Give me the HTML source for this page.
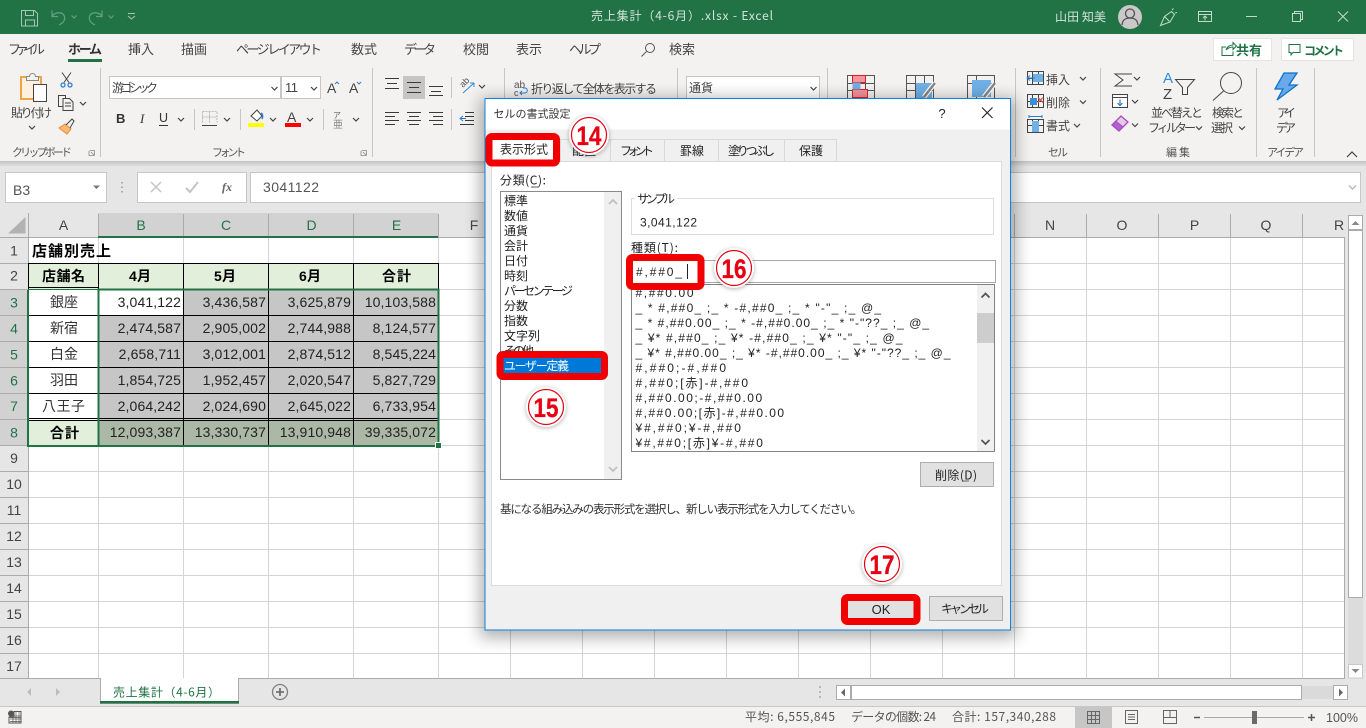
<!DOCTYPE html>
<html lang="ja">
<head>
<meta charset="utf-8">
<title>売上集計（4-6月）.xlsx - Excel</title>
<style>
html,body{margin:0;padding:0;width:1366px;height:728px;overflow:hidden;background:#e6e6e6}
svg{display:block;position:absolute;left:0;top:0}
text{font-family:"Liberation Sans","Noto Sans CJK JP",sans-serif;font-size:12px;fill:#444}
.jp{font-family:"Noto Sans CJK JP","Liberation Sans",sans-serif}
.tb{fill:#d3e3da}
.rb{font-size:12px;fill:#444}
.tab{font-size:13px;fill:#444}
.lb{font-size:11px;fill:#555}
.hd{font-size:14px;fill:#444}
.sh{font-size:14px;fill:#217346}
.c{font-size:14px;fill:#222;text-anchor:end;letter-spacing:.12px}
.b{font-weight:bold;fill:#000}
.d{font-size:12px;fill:#222}
.bd{font-weight:bold;fill:#e60012;font-size:27px;text-anchor:middle;stroke:#e60012;stroke-width:.3px}
.ic{fill:none;stroke:#444;stroke-width:1}
.ch{fill:none;stroke:#444;stroke-width:1.2}
.g{stroke:#d4d4d4;stroke-width:1}
.k{stroke:#000;stroke-width:1}
.hl{stroke:#ababab;stroke-width:1}
</style>
</head>
<body>
<svg width="1366" height="728" viewBox="0 0 1366 728" xmlns="http://www.w3.org/2000/svg">
<defs>
<filter id="sd" x="-10%" y="-10%" width="120%" height="120%"><feGaussianBlur stdDeviation="8"/></filter>
<filter id="bs" x="-30%" y="-30%" width="160%" height="160%"><feGaussianBlur stdDeviation="2.5"/></filter>
<linearGradient id="rs" x1="0" y1="0" x2="0" y2="1"><stop offset="0" stop-color="#c2c2c2"/><stop offset="1" stop-color="#e6e6e6"/></linearGradient>
<clipPath id="fl"><rect x="632" y="285" width="345" height="166"/></clipPath>
<clipPath id="cl"><rect x="501" y="192" width="102" height="287"/></clipPath>
</defs>

<!-- title bar -->
<rect width="1366" height="34" fill="#217346"/>
<g fill="none" stroke="#a7c7b6">
<path d="M21.5 10.5h13l3 3v12.5h-16z"/><path d="M25.5 10.5v5h8v-5M25.5 26v-6h9v6"/>
<path d="M128 13.5h7"/><path d="M128 16l3.5 3 3.5-3"/>
</g>
<g fill="none" stroke="#64a083" stroke-width="1.2">
<path d="M52 10.5v6h6M52 16.5c3-5 11-5 12.5 0c1 4-2 7-5.500 8.5"/>
<path d="M71.5 15.5l2.5 2.5 2.5-2.5"/>
<path d="M102 10.5v6h-6M102 16.5c-3-5-11-5-12.5 0c-1 4 2 7 5.500 8.5"/>
<path d="M108.5 15.5l2.5 2.5 2.5-2.5"/>
</g>
<text x="591" y="20" class="tb jp" textLength="182">売上集計（4-6月）.xlsx  -  Excel</text>
<text x="1055" y="21" class="tb jp" textLength="51">山田 知美</text>
<circle cx="1130" cy="17" r="12" fill="#c9c9c9"/>
<circle cx="1130" cy="13.5" r="4.5" fill="none" stroke="#505050" stroke-width="1.300"/>
<path d="M1122 25c.5-5 3-7 8-7s7.5 2 8 7" fill="none" stroke="#505050" stroke-width="1.300"/>
<g fill="none" stroke="#c3d9cd">
<path d="M1160.5 25.5l4-9 7-5 3 3-4.5 7.5z"/><path d="M1164.5 16.5l5 5M1172 10l1.5-1.5M1175 13l2-.5"/>
<rect x="1198.5" y="11.5" width="13" height="10"/><path d="M1198.5 14.5h13M1205 20.5v-4.500M1203 18l2-2 2 2"/>
<path d="M1246 16.5h11"/>
<rect x="1292.5" y="13.5" width="8" height="8"/><path d="M1294.5 13.5v-2h8v8h-2"/>
<path d="M1338 11.5l10 10M1348 11.5l-10 10"/>
</g>

<!-- ribbon -->
<rect y="34" width="1366" height="127" fill="#f3f2f1"/>
<rect y="161" width="1366" height="6" fill="url(#rs)"/>
<rect y="167" width="1366" height="46" fill="#e6e6e6"/>
<text x="8" y="54" class="tab jp" textLength="37">ファイル</text>
<text x="68" y="54" class="tab jp" style="font-weight:bold;fill:#333" textLength="34">ホーム</text>
<text x="128" y="54" class="tab jp" textLength="26">挿入</text>
<text x="181" y="54" class="tab jp" textLength="26">描画</text>
<text x="236" y="54" class="tab jp" textLength="86">ページ レイアウト</text>
<text x="351" y="54" class="tab jp" textLength="26">数式</text>
<text x="404" y="54" class="tab jp" textLength="32">データ</text>
<text x="463" y="54" class="tab jp" textLength="26">校閲</text>
<text x="516" y="54" class="tab jp" textLength="26">表示</text>
<text x="569" y="54" class="tab jp" textLength="32">ヘルプ</text>
<text x="669" y="54" class="tab jp" textLength="26">検索</text>
<rect x="68" y="59" width="34" height="3" fill="#217346"/>
<circle cx="650" cy="48" r="4.5" fill="none" stroke="#555"/><path d="M646.500 51.500l-5 5" stroke="#555" fill="none"/>
<rect x="1213.5" y="38.5" width="58" height="22" fill="#fff" stroke="#e4e4e4"/>
<rect x="1281.5" y="38.5" width="72" height="22" fill="#fff" stroke="#e4e4e4"/>
<path d="M1226 47h-4v8.500h11v-4M1226 50c1-3 3-5 7-5v-2.500l3.500 3.500-3.500 3.500V47c-3 0-5 1-7 3z" fill="none" stroke="#217346"/>
<text x="1236" y="55" class="jp" style="font-size:13px;font-weight:bold;fill:#217346" textLength="26">共有</text>
<path d="M1289 44.500h11v8h-7l-2 2.500v-2.500h-2z" fill="none" stroke="#217346"/>
<text x="1304" y="55" class="jp" style="font-size:12px;font-weight:bold;fill:#217346" textLength="40">コメント</text>

<!-- group separators -->
<g stroke="#c8c6c4"><path d="M100.500 68v89M372.500 68v89M504.500 68v30M677.500 68v30M827.500 68v30M1015.500 68v89M1100.500 68v89M1256.500 68v89M1314.500 68v89"/></g>

<!-- clipboard -->
<rect x="21" y="77" width="20" height="22" fill="#fdf0dd" stroke="#f0a545" stroke-width="2"/>
<path d="M26.500 80.500v-4h3c0-4 6-4 6 0h3v4z" fill="#f3f2f1" stroke="#888"/>
<rect x="33.5" y="84.5" width="13" height="17" fill="#fff" stroke="#444"/>
<text x="11" y="117" class="rb jp" textLength="41">貼り付け</text>
<path d="M29 126l3 3 3-3" class="ch"/>
<path d="M62 72.5l7 10M71 72.5l-7 10" class="ic"/>
<circle cx="63" cy="85" r="2" fill="none" stroke="#2b7cd3" stroke-width="1.300"/><circle cx="70" cy="85" r="2" fill="none" stroke="#2b7cd3" stroke-width="1.300"/>
<path d="M62.500 106.500h-4v-11h7v3" class="ic"/><path d="M63 98.500h6.5l3.5 3.5v8.500H63zM65 103h6M65 106h6" class="ic" fill="#fff"/>
<path d="M80 102l3 3 3-3" class="ch"/>
<path d="M59 128l8 6 4-5-6-5z" fill="#f8b878" stroke="#ea8c30"/><path d="M66 125l6-6 2 2-4 7" fill="none" stroke="#444"/>
<text x="12" y="156" class="lb jp" textLength="60">クリップボード</text>
<path d="M89.500 150.500h5v5M91 152l3.5 3.500M89 151v4.500h5" fill="none" stroke="#888" stroke-width=".8"/>

<!-- font -->
<rect x="109.5" y="76.5" width="171" height="22" fill="#fff" stroke="#c6c6c6"/>
<rect x="281.5" y="76.5" width="39" height="22" fill="#fff" stroke="#c6c6c6"/>
<text x="112" y="92" class="rb jp" textLength="46">游ゴシック</text>
<text x="285" y="92" style="font-size:13px;fill:#444" textLength="13">11</text>
<path d="M271.500 87l3 3 3-3M311 87l3 3 3-3" class="ch"/>
<text x="327" y="93" style="font-size:14px;fill:#444">A</text><path d="M335 84l2-2 2 2" fill="none" stroke="#2b7cd3"/>
<text x="349" y="93" style="font-size:14px;fill:#444">A</text><path d="M357 82l2 2 2-2" fill="none" stroke="#2b7cd3"/>
<text x="116" y="123" style="font-size:13px;font-weight:bold;fill:#333">B</text>
<text x="140" y="123" style="font-size:13px;font-style:italic;fill:#333;font-family:'Liberation Serif',serif">I</text>
<text x="159" y="122" style="font-size:12.5px;fill:#333">U</text><path d="M159 125.500h9" stroke="#333"/>
<path d="M178 118l3 3 3-3" class="ch"/>
<path d="M194.500 109v21M240.500 109v21M323.500 109v21" stroke="#c8c6c4"/>
<path d="M202.500 111.500h14.500v11M202.500 111.500v11M209.500 111.500v11M202.500 117h14.500" fill="none" stroke="#bbb" stroke-dasharray="2 1"/><path d="M202 125.500h15" stroke="#444"/>
<path d="M224 118l3 3 3-3" class="ch"/>
<path d="M251 116l6-6 5 6-5 5z" fill="#fff" stroke="#444"/><path d="M261 113c2 1 2 4 1 6" fill="none" stroke="#2b7cd3" stroke-width="1.500"/>
<rect x="248" y="123" width="16" height="4" fill="#ffff00"/>
<path d="M270 118l3 3 3-3" class="ch"/>
<text x="287" y="122" style="font-size:14px;fill:#444">A</text>
<rect x="285" y="123" width="16" height="4" fill="#ff0000"/>
<path d="M307 118l3 3 3-3" class="ch"/>
<text x="333" y="118" class="jp" style="font-size:8px;fill:#666">ア</text>
<text x="333" y="128" class="jp" style="font-size:10px;fill:#888">亜</text>
<path d="M353 118l3 3 3-3" class="ch"/>
<text x="212" y="156" class="lb jp" textLength="34">フォント</text>
<path d="M361.500 150.500h5v5M363 152l3.500 3.500M361 151v4.500h5" fill="none" stroke="#888" stroke-width=".8"/>

<!-- alignment -->
<rect x="403" y="76" width="22" height="23" fill="#c6c5c3"/>
<g stroke="#3a3a3a" fill="none">
<path d="M385 78.500h14M387 83.500h10M385 88.500h14"/>
<path d="M407 82.500h14M409 87.500h10M407 92.500h14"/>
<path d="M429 86.500h14M431 91.500h10M429 95.500h14"/>
<path d="M385 112.500h14M385 116.500h10M385 120.500h14M385 124.500h10"/>
<path d="M407 112.500h14M409 116.500h10M407 120.500h14M409 124.500h10"/>
<path d="M429 112.500h14M433 116.500h10M429 120.500h14M433 124.500h10"/>
<path d="M465 112.500h9M465 116.500h9M465 120.500h9M460 124.500h14"/>
</g>
<path d="M460 118.500h6M463 116l-3 2.500 3 2.500" fill="none" stroke="#2b7cd3"/>
<path d="M451.500 77v21M451.500 109v21" stroke="#c8c6c4"/>
<text x="0" y="0" transform="translate(463,88) rotate(-45)" style="font-size:9px;fill:#555">ab</text>
<path d="M463 93l11-10M474 83h-4M474 83v4" fill="none" stroke="#2b8fd8"/>
<path d="M479 85l3 3 3-3" class="ch"/>
<text x="514" y="88" style="font-size:10px;fill:#555">ab</text><text x="514" y="96" style="font-size:9px;fill:#555">c</text>
<path d="M520 93h5c3 0 3-5 0-5h-2M522 91l-2 2 2 2" fill="none" stroke="#2b7cd3"/>
<text x="531" y="93" class="rb jp" textLength="126">折り返して全体を表示する</text>
<rect x="686.5" y="76.5" width="133" height="22" fill="#fff" stroke="#c6c6c6"/>
<text x="689" y="92" class="rb jp" textLength="24">通貨</text>
<path d="M810.500 87l3 3 3-3" class="ch"/>

<!-- styles -->
<g fill="none" stroke="#555"><path d="M847.500 75.500h27v23h-27zM847.500 83.500h27M847.500 90.500h27M856.500 75.500v23M865.500 75.500v23"/></g>
<rect x="852.5" y="75.500" width="13" height="7" fill="#f4949c" stroke="#e02020"/>
<rect x="852.5" y="89.500" width="15" height="8" fill="#f4949c" stroke="#e02020"/>
<rect x="852.5" y="82.500" width="8" height="7" fill="#70b0e6"/>
<g fill="none" stroke="#555"><path d="M906.500 75.500h27v23h-27zM906.500 83.500h27M906.500 90.500h27M915.500 75.500v23M924.500 75.500v23"/></g>
<rect x="916" y="83" width="16" height="15" fill="#70b0e6"/>
<path d="M924 97l11-14" stroke="#fff" stroke-width="5" fill="none"/><path d="M924 97l11-14" stroke="#888" stroke-width="2.500" fill="none"/>
<g fill="none" stroke="#555"><path d="M967.500 75.500h27v23h-27zM967.500 83.500h27M976.500 75.500v23"/></g>
<rect x="972" y="80" width="19" height="17" fill="#70b0e6"/>
<path d="M984 97l11-14" stroke="#fff" stroke-width="5" fill="none"/><path d="M984 97l11-14" stroke="#888" stroke-width="2.500" fill="none"/>

<!-- cells -->
<g fill="none" stroke="#444">
<path d="M1027.500 71.500h16v13h-16zM1032.500 71.500v13M1038.500 71.500v13M1027.500 78.500h16"/>
<path d="M1027.500 94.500h16v13h-16zM1032.500 94.500v13M1038.500 94.500v13M1027.500 101.500h16"/>
<path d="M1027.500 119.500h16v13h-16zM1032.500 119.500v13M1038.500 119.500v13M1027.500 125.500h16"/>
</g>
<rect x="1033" y="74" width="10" height="8" fill="#6fb0e6"/><path d="M1027 78h8M1030 75.500l-3 2.500 3 2.500" fill="none" stroke="#2b7cd3"/>
<rect x="1030" y="98" width="7" height="7" fill="#3a8fd8"/><path d="M1038 97.500l5 5M1043 97.500l-5 5" stroke="#e54b4b" stroke-width="1.200" fill="none"/>
<rect x="1032" y="121" width="7" height="11" fill="#6fb0e6"/><path d="M1029 116.500h13M1029 115v3M1042 115v3" stroke="#2b7cd3" fill="none"/>
<text x="1046" y="84" class="rb jp" textLength="24">挿入</text>
<text x="1046" y="107" class="rb jp" textLength="24">削除</text>
<text x="1046" y="130" class="rb jp" textLength="24">書式</text>
<path d="M1080 77l3 3 3-3M1080 100.500l3 3 3-3M1074 124l3 3 3-3" class="ch"/>
<text x="1048" y="156" class="lb jp" textLength="20">セル</text>

<!-- editing -->
<path d="M1132 74h-17l8 6-8 6h17" fill="none" stroke="#444"/>
<path d="M1134 77l3 3 3-3" class="ch"/>
<rect x="1112.5" y="94.5" width="15" height="13" fill="#fff" stroke="#444"/><path d="M1112.500 97.500h15" stroke="#444"/><path d="M1120 99.500v6M1117.500 103l2.500 2.500 2.500-2.500" fill="none" stroke="#2b7cd3" stroke-width="1.200"/>
<path d="M1132 100l3 3 3-3" class="ch"/>
<path d="M1112 125l9-9 7 6-9 9z" fill="#e6c8ee" stroke="#a34fbd" stroke-width="1.300"/><path d="M1112 125l4-4 7 6-4 4z" fill="#b45fcf" stroke="#a34fbd"/>
<path d="M1132 123.500l3 3 3-3" class="ch"/>
<text x="1163" y="83" style="font-size:15px;fill:#2b8fd8">A</text>
<text x="1163" y="99" style="font-size:15px;fill:#444">Z</text>
<path d="M1175.500 79.500h19l-7 8v7h-5v-7z" fill="none" stroke="#444"/>
<text x="1151" y="117" class="rb jp" textLength="52">並べ替えと</text>
<text x="1148" y="132" class="rb jp" textLength="48">フィルター</text>
<path d="M1196 126.500l3 3 3-3" class="ch"/>
<circle cx="1231" cy="83" r="10.500" fill="none" stroke="#444"/><path d="M1223.500 91l-10.500 9.500" stroke="#444" fill="none"/>
<text x="1212" y="117" class="rb jp" textLength="32">検索と</text>
<text x="1211" y="132" class="rb jp" textLength="22">選択</text>
<path d="M1239 126.500l3 3 3-3" class="ch"/>
<text x="1166" y="156" class="lb jp" textLength="24">編集</text>

<!-- ideas -->
<path d="M1284 73h13l-8 12h8l-20 15 6-11h-8z" fill="#6aa8ea" stroke="#0a74c9" stroke-width="1.300"/>
<text x="1277" y="117" class="rb jp" textLength="19">アイ</text>
<text x="1276" y="132" class="rb jp" textLength="20">デア</text>
<text x="1267" y="156" class="lb jp" textLength="37">アイデア</text>
<path d="M1347 157l5-5 5 5" fill="none" stroke="#444" stroke-width="1.200"/>

<!-- formula bar -->
<rect x="5.5" y="172.5" width="101" height="30" fill="#fff" stroke="#c6c6c6"/>
<text x="13" y="195" style="font-size:14px;fill:#555">B3</text>
<path d="M93 185.500h7l-3.500 3.500z" fill="#777"/>
<path d="M122 182v1.500M122 186.500v1.500M122 191v1.500" stroke="#999" stroke-width="1.500"/>
<rect x="137.5" y="172.5" width="109" height="30" fill="#fff" stroke="#c6c6c6"/>
<path d="M151 182l10 10M161 182l-10 10" stroke="#c4c4c4" stroke-width="1.500" fill="none"/>
<path d="M186 188l4 4 8-10" stroke="#c4c4c4" stroke-width="2" fill="none"/>
<text x="222" y="191" style="font-size:12px;font-style:italic;font-weight:bold;fill:#666;font-family:'Liberation Serif',serif">fx</text>
<rect x="250.5" y="172.5" width="1110" height="30" fill="#fff" stroke="#c6c6c6"/>
<text x="263" y="192" style="font-size:14px;fill:#555" textLength="56">3041122</text>
<path d="M1349 185.500l3.500 3.500 3.500-3.500" fill="none" stroke="#bbb" stroke-width="1.500"/>

<!-- grid -->
<rect x="28" y="237" width="1316" height="441" fill="#fff"/>
<rect y="213" width="1366" height="24" fill="#e6e6e6"/>
<rect y="237" width="28" height="441" fill="#e6e6e6"/>
<rect x="1344" y="237" width="22" height="441" fill="#e6e6e6"/>
<rect x="98" y="213" width="340" height="24" fill="#d2d2d2"/>
<rect y="289" width="28" height="156" fill="#d2d2d2"/>
<path d="M25.500 217v16.500H8z" fill="#b2b2b2"/>
<g class="g"><path d="M28 263.500h1316M28 289.500h1316M28 315.500h1316M28 341.500h1316M28 367.500h1316M28 393.500h1316M28 419.500h1316M28 445.500h1316M28 471.500h1316M28 497.500h1316M28 523.500h1316M28 549.500h1316M28 575.500h1316M28 601.500h1316M28 627.500h1316M28 653.500h1316"/>
<path d="M98.500 237v441M183.500 237v441M268.500 237v441M353.500 237v441M438.500 237v441M510.500 237v441M582.500 237v441M654.500 237v441M726.500 237v441M798.500 237v441M870.500 237v441M942.500 237v441M1014.500 237v441M1086.500 237v441M1158.500 237v441M1230.500 237v441M1302.500 237v441"/></g>
<g class="hl"><path d="M28.500 213v465M0 237.500h1345M1344.500 237v441M0 678.500h1345"/>
<path d="M98.500 214v23M183.500 214v23M268.500 214v23M353.500 214v23M438.500 214v23M510.500 214v23M1014.500 214v23M1086.500 214v23M1158.500 214v23M1230.500 214v23M1302.500 214v23"/>
<path d="M0 263.500h28M0 289.500h28M0 315.500h28M0 341.500h28M0 367.500h28M0 393.500h28M0 419.500h28M0 445.500h28M0 471.500h28M0 497.500h28M0 523.500h28M0 549.500h28M0 575.500h28M0 601.500h28M0 627.500h28M0 653.500h28"/></g>
<text x="63.5" y="230" class="hd" text-anchor="middle">A</text>
<text x="141" y="230" class="sh" text-anchor="middle">B</text>
<text x="226" y="230" class="sh" text-anchor="middle">C</text>
<text x="311.5" y="230" class="sh" text-anchor="middle">D</text>
<text x="396.5" y="230" class="sh" text-anchor="middle">E</text>
<text x="474" y="230" class="hd" text-anchor="middle">F</text>
<text x="1050" y="230" class="hd" text-anchor="middle">N</text>
<text x="1122" y="230" class="hd" text-anchor="middle">O</text>
<text x="1194.5" y="230" class="hd" text-anchor="middle">P</text>
<text x="1266" y="230" class="hd" text-anchor="middle">Q</text>
<text x="1339" y="230" class="hd" text-anchor="middle">R</text>
<text x="14" y="255.5" class="hd" text-anchor="middle">1</text>
<text x="14" y="280.5" class="hd" text-anchor="middle">2</text>
<text x="14" y="307.5" class="sh" text-anchor="middle">3</text>
<text x="14" y="333.5" class="sh" text-anchor="middle">4</text>
<text x="14" y="359.5" class="sh" text-anchor="middle">5</text>
<text x="14" y="385.5" class="sh" text-anchor="middle">6</text>
<text x="14" y="411" class="sh" text-anchor="middle">7</text>
<text x="14" y="437.5" class="sh" text-anchor="middle">8</text>
<text x="14" y="463" class="hd" text-anchor="middle">9</text>
<text x="14" y="489" class="hd" text-anchor="middle">10</text>
<text x="14" y="515" class="hd" text-anchor="middle">11</text>
<text x="14" y="541" class="hd" text-anchor="middle">12</text>
<text x="14" y="567" class="hd" text-anchor="middle">13</text>
<text x="14" y="593" class="hd" text-anchor="middle">14</text>
<text x="14" y="619" class="hd" text-anchor="middle">15</text>
<text x="14" y="645" class="hd" text-anchor="middle">16</text>
<text x="14" y="671" class="hd" text-anchor="middle">17</text>
<!-- table -->
<rect x="29" y="264" width="409" height="25" fill="#e2efda"/>
<rect x="29" y="421" width="69" height="24" fill="#e2efda"/>
<rect x="29" y="290" width="69" height="130" fill="#fff"/>
<rect x="99" y="290" width="339" height="130" fill="#c6c6c6"/>
<rect x="99" y="290" width="84" height="25" fill="#fff"/>
<rect x="99" y="420" width="339" height="25" fill="#acb8a6"/>
<g class="k"><path d="M28 263.500h411M28 287.500h70M28 289.500h411M28 315.500h411M28 341.500h411M28 367.500h411M28 393.500h411M28 418.500h411M28 420.500h411M28 445.500h411"/>
<path d="M98.500 263v183M183.500 263v183M268.500 263v183M353.500 263v183M438.500 263v183M28.500 263v27"/></g>
<text x="32" y="256" class="jp b" style="font-size:15px" textLength="79">店舗別売上</text>
<text x="42" y="281" class="jp b" style="font-size:14px" textLength="43">店舗名</text>
<text x="129" y="281" class="b" style="font-size:14px" textLength="22">4月</text>
<text x="214" y="281" class="b" style="font-size:14px" textLength="22">5月</text>
<text x="299" y="281" class="b" style="font-size:14px" textLength="22">6月</text>
<text x="382" y="281" class="jp b" style="font-size:14px" textLength="29">合計</text>
<text x="50" y="307" class="jp" style="font-size:14px;fill:#333" textLength="28">銀座</text>
<text x="50" y="333" class="jp" style="font-size:14px;fill:#333" textLength="28">新宿</text>
<text x="50" y="359" class="jp" style="font-size:14px;fill:#333" textLength="28">白金</text>
<text x="50" y="385" class="jp" style="font-size:14px;fill:#333" textLength="28">羽田</text>
<text x="42" y="411" class="jp" style="font-size:14px;fill:#333" textLength="43">八王子</text>
<text x="50" y="438" class="jp b" style="font-size:14px" textLength="29">合計</text>
<text x="181" y="307" class="c">3,041,122</text><text x="266" y="307" class="c">3,436,587</text><text x="351" y="307" class="c">3,625,879</text><text x="436" y="307" class="c">10,103,588</text>
<text x="181" y="333" class="c">2,474,587</text><text x="266" y="333" class="c">2,905,002</text><text x="351" y="333" class="c">2,744,988</text><text x="436" y="333" class="c">8,124,577</text>
<text x="181" y="359" class="c">2,658,711</text><text x="266" y="359" class="c">3,012,001</text><text x="351" y="359" class="c">2,874,512</text><text x="436" y="359" class="c">8,545,224</text>
<text x="181" y="385" class="c">1,854,725</text><text x="266" y="385" class="c">1,952,457</text><text x="351" y="385" class="c">2,020,547</text><text x="436" y="385" class="c">5,827,729</text>
<text x="181" y="411" class="c">2,064,242</text><text x="266" y="411" class="c">2,024,690</text><text x="351" y="411" class="c">2,645,022</text><text x="436" y="411" class="c">6,733,954</text>
<text x="181" y="437" class="c">12,093,387</text><text x="266" y="437" class="c">13,330,737</text><text x="351" y="437" class="c">13,910,948</text><text x="436" y="437" class="c">39,335,072</text>
<!-- selection -->
<path d="M28 290v156h70" fill="none" stroke="#217346" stroke-width="2"/>
<path d="M28 289.500h70" stroke="#217346"/>
<rect x="98.5" y="289.5" width="340" height="156.500" fill="none" stroke="#217346" stroke-width="2"/>
<rect x="98" y="236" width="340" height="2" fill="#217346"/>
<rect x="435.5" y="442.5" width="6" height="6" fill="#217346" stroke="#fff"/>

<!-- vertical scrollbar -->
<rect x="1348" y="215" width="15" height="463" fill="#dcdcdc"/>
<rect x="1348.5" y="215.5" width="14" height="14" fill="#fff" stroke="#ababab"/>
<path d="M1351.500 225h8l-4-4z" fill="#888"/>
<rect x="1348.5" y="230.5" width="14" height="367" fill="#fff" stroke="#ababab"/>
<rect x="1348.5" y="664.5" width="14" height="13.500" fill="#fff" stroke="#c8c8c8"/>
<path d="M1351.500 669h8l-4 4z" fill="#888"/>

<!-- sheet tabs -->
<rect y="679" width="1366" height="27" fill="#e6e6e6"/>
<rect y="706" width="1366" height="22" fill="#f3f2f1"/>
<path d="M0 706.500h1366" stroke="#c8c8c8"/>
<rect x="100.5" y="678.5" width="138" height="25" fill="#fff" stroke="#ababab"/>
<rect x="101" y="678" width="137" height="2" fill="#fff"/>
<rect x="100" y="701" width="139" height="2.500" fill="#217346"/>
<text x="113" y="696.5" class="jp" style="font-size:12px;fill:#217346" textLength="107">売上集計（4-6月）</text>
<path d="M31 688v8l-4-4zM56 688v8l4-4z" fill="#bdbdbd"/>
<circle cx="280" cy="692" r="7.500" fill="none" stroke="#808080" stroke-width="1.300"/>
<path d="M276 692h8M280 688v8" stroke="#666" stroke-width="1.600"/>
<path d="M820 686v2M820 691v2M820 696v2" stroke="#aaa" stroke-width="1.500"/>
<rect x="836.5" y="685.5" width="511" height="14" fill="#dadada" stroke="#e6e6e6"/>
<rect x="836.5" y="685.5" width="14" height="14" fill="#fff" stroke="#ababab"/>
<path d="M845 688.500v8l-4-4z" fill="#666"/>
<rect x="851.5" y="685.5" width="450" height="14" fill="#fff" stroke="#ababab"/>
<rect x="1333.5" y="685.5" width="14" height="14" fill="#fff" stroke="#ababab"/>
<path d="M1339 688.500v8l4-4z" fill="#666"/>

<!-- status bar -->
<circle cx="11" cy="713.500" r="3" fill="#555"/>
<path d="M14 711.500h7v11.500H9v-6h5z" fill="#fff" stroke="#555"/><path d="M10 716h11v1.500H10zM10 719h11M10 721.500h11M13 717v6M16 712v11M19 712v11" stroke="#555" fill="none" stroke-width=".7"/>
<text x="745" y="721" class="jp" style="font-size:12px;fill:#555" textLength="90">平均: 6,555,845</text>
<text x="851" y="721" class="jp" style="font-size:12px;fill:#555" textLength="85">データの個数: 24</text>
<text x="952" y="721" class="jp" style="font-size:12px;fill:#555" textLength="104">合計: 157,340,288</text>
<rect x="1075" y="707" width="37" height="21" fill="#c6c6c6"/>
<g fill="none" stroke="#666">
<path d="M1087.500 711.500h12v12h-12zM1087.500 715.500h12M1087.500 719.500h12M1091.500 711.500v12M1095.500 711.500v12"/>
<path d="M1125.500 710.500h12v13h-12zM1128 714.500h7M1128 717h7M1128 719.500h7"/>
<path d="M1163.500 710.500h13v13h-13zM1170 710.500v7h6.500M1163.500 717.500h6.500"/>
</g>
<path d="M1194 717.500h6" stroke="#555" stroke-width="1.500"/>
<path d="M1204 717.500h100" stroke="#a8a8a8"/>
<rect x="1252" y="711" width="5" height="13" fill="#6a6a6a"/>
<path d="M1308 717.500h7M1311.500 714v7" stroke="#555" stroke-width="1.500"/>
<text x="1326" y="722" style="font-size:12.5px;fill:#555" textLength="32">100%</text>

<!-- dialog shadow -->
<rect x="480" y="98" width="536" height="540" fill="#000" opacity=".3" filter="url(#sd)"/>
<!-- dialog -->
<rect x="485" y="98.5" width="525.5" height="531.5" fill="#f0f0f0" stroke="#0a84dc" stroke-width="1"/>
<rect x="485.5" y="99" width="524.5" height="30.5" fill="#fff"/>
<text x="493.5" y="117.5" class="jp" style="font-size:11px;fill:#333" textLength="77">セルの書式設定</text>
<text x="942" y="118" text-anchor="middle" style="font-size:13px;fill:#222">?</text>
<path d="M982 107.500l10.500 10.500M992.500 107.500L982 118" stroke="#222" fill="none" stroke-width="1.100"/>

<rect x="491.5" y="161.5" width="510" height="424" fill="#fff" stroke="#dcdcdc"/>
<!-- tabs -->
<g fill="#f0f0f0" stroke="#d9d9d9">
<rect x="560.5" y="139.5" width="50" height="22"/>
<rect x="610.5" y="139.5" width="54" height="22"/>
<rect x="664.5" y="139.5" width="54" height="22"/>
<rect x="718.5" y="139.5" width="66" height="22"/>
<rect x="784.5" y="139.5" width="52" height="22"/>
</g>
<text x="572" y="155" class="jp d" textLength="24">配置</text>
<text x="620" y="155" class="jp d" textLength="34">フォント</text>
<text x="680" y="155" class="jp d" textLength="24">罫線</text>
<text x="728" y="155" class="jp d" textLength="47">塗りつぶし</text>
<text x="799" y="155" class="jp d" textLength="24">保護</text>

<!-- red frame tab -->
<rect x="489" y="136.5" width="67.5" height="26.5" rx="3" fill="#fff" stroke="#f00000" stroke-width="7"/>
<text x="500" y="153.5" class="jp d" textLength="48">表示形式</text>

<!-- category -->
<text x="500" y="184.5" class="jp d" textLength="46">分類(C):</text>
<path d="M531 187h8" stroke="#333" stroke-width=".8"/>
<rect x="500.5" y="191.5" width="121" height="288" fill="#fff" stroke="#8a8a8a"/>
<rect x="604" y="192" width="17" height="287" fill="#f0f0f0"/>
<path d="M609 204l4-4 4 4M609 467l4 4 4-4" fill="none" stroke="#c0c0c0" stroke-width="1.800"/>
<g clip-path="url(#cl)">
<text x="504" y="205" class="jp d" textLength="24">標準</text>
<text x="504" y="220" class="jp d" textLength="24">数値</text>
<text x="504" y="235" class="jp d" textLength="24">通貨</text>
<text x="504" y="250" class="jp d" textLength="24">会計</text>
<text x="504" y="265" class="jp d" textLength="24">日付</text>
<text x="504" y="280" class="jp d" textLength="24">時刻</text>
<text x="504" y="295" class="jp d" textLength="69">パーセンテージ</text>
<text x="504" y="310" class="jp d" textLength="24">分数</text>
<text x="504" y="325" class="jp d" textLength="24">指数</text>
<text x="504" y="340" class="jp d" textLength="36">文字列</text>
<text x="504" y="355" class="jp d" textLength="30">その他</text>
</g>
<rect x="500" y="354.5" width="104.5" height="22" rx="3" fill="#0078d7" stroke="#f00000" stroke-width="7"/>
<text x="504" y="370" class="jp" style="font-size:12px;fill:#fff" textLength="65">ユーザー定義</text>

<!-- sample -->
<rect x="631.5" y="198.5" width="362" height="36" fill="#fff" stroke="#dcdcdc"/>
<rect x="635" y="193" width="42" height="10" fill="#fff"/>
<text x="637" y="203" class="jp d" textLength="38">サンプル</text>
<text x="640" y="226.5" class="d" textLength="57">3,041,122</text>
<text x="631" y="252" class="jp d" textLength="47">種類(T):</text>
<path d="M660 254h8" stroke="#333" stroke-width=".6"/>
<rect x="631.5" y="260.5" width="364" height="22" fill="#fff" stroke="#a8a8a8"/>

<!-- format list -->
<rect x="631.5" y="284.5" width="363" height="167" fill="#fff" stroke="#828282"/>
<rect x="977" y="285" width="17" height="166" fill="#f0f0f0"/>
<rect x="977" y="313" width="17" height="30" fill="#cdcdcd"/>
<path d="M981.5 297.5l4-4 4 4M981.5 440l4 4 4-4" fill="none" stroke="#555" stroke-width="1.800"/>
<g clip-path="url(#fl)">
<text x="635.5" y="297" class="d" textLength="58">#,##0.00</text>
<text x="635.5" y="312" class="d" textLength="245.6">_ * #,##0_ ;_ * -#,##0_ ;_ * "-"_ ;_ @_</text>
<text x="635.5" y="327" class="d" textLength="293.6">_ * #,##0.00_ ;_ * -#,##0.00_ ;_ * "-"??_ ;_ @_</text>
<text x="635.5" y="342" class="d" textLength="267">_ ¥* #,##0_ ;_ ¥* -#,##0_ ;_ ¥* "-"_ ;_ @_</text>
<text x="635.5" y="357" class="d" textLength="315">_ ¥* #,##0.00_ ;_ ¥* -#,##0.00_ ;_ ¥* "-"??_ ;_ @_</text>
<text x="635.5" y="372" class="d" textLength="90.5">#,##0;-#,##0</text>
<text x="635.5" y="387" class="d" textLength="112.5">#,##0;[赤]-#,##0</text>
<text x="635.5" y="402" class="d" textLength="126.7">#,##0.00;-#,##0.00</text>
<text x="635.5" y="417" class="d" textLength="148.6">#,##0.00;[赤]-#,##0.00</text>
<text x="635.5" y="432" class="d" textLength="105.4">¥#,##0;¥-#,##0</text>
<text x="635.5" y="447" class="d" textLength="127.4">¥#,##0;[赤]¥-#,##0</text>
</g>
<!-- red frame input -->
<rect x="629.5" y="257.5" width="71.5" height="29" rx="3" fill="#fff" stroke="#f00000" stroke-width="7"/>
<text x="636" y="276" class="d" textLength="46">#,##0_</text>
<path d="M687.5 264v15" stroke="#222"/>

<!-- buttons and description -->
<rect x="920.5" y="462.5" width="73" height="24" fill="#e1e1e1" stroke="#adadad"/>
<text x="935" y="479.5" class="jp d" textLength="42">削除(D)</text>
<path d="M963 481h6" stroke="#333" stroke-width=".7"/>
<text x="500" y="513" class="jp" style="font-size:11.5px;fill:#333" textLength="362">基になる組み込みの表示形式を選択し、新しい表示形式を入力してください。</text>
<rect x="844.5" y="597.5" width="72.5" height="24" rx="3" fill="#e1e1e1" stroke="#f00000" stroke-width="7"/>
<text x="881" y="614" text-anchor="middle" style="font-size:13px;fill:#222">OK</text>
<rect x="929.5" y="596.5" width="73" height="24" fill="#e1e1e1" stroke="#adadad"/>
<text x="941" y="613" class="jp d" textLength="48">キャンセル</text>

<!-- badges -->
<circle cx="589" cy="136" r="20" fill="#000" opacity=".3" filter="url(#bs)"/>
<circle cx="589" cy="135" r="20" fill="#fff"/>
<circle cx="589" cy="135" r="17.5" fill="#fff" stroke="#e60012" stroke-width="1.200"/>
<text x="589" y="145" class="bd" textLength="25" lengthAdjust="spacingAndGlyphs">14</text>

<circle cx="734" cy="269" r="20" fill="#000" opacity=".3" filter="url(#bs)"/>
<circle cx="734" cy="268" r="20" fill="#fff"/>
<circle cx="734" cy="268" r="17.5" fill="#fff" stroke="#e60012" stroke-width="1.200"/>
<text x="734" y="278" class="bd" textLength="25" lengthAdjust="spacingAndGlyphs">16</text>

<circle cx="546" cy="408" r="20" fill="#000" opacity=".3" filter="url(#bs)"/>
<circle cx="546" cy="407" r="20" fill="#fff"/>
<circle cx="546" cy="407" r="17.5" fill="#fff" stroke="#e60012" stroke-width="1.200"/>
<text x="546" y="417" class="bd" textLength="25" lengthAdjust="spacingAndGlyphs">15</text>

<circle cx="882" cy="565" r="20" fill="#000" opacity=".3" filter="url(#bs)"/>
<circle cx="882" cy="564" r="20" fill="#fff"/>
<circle cx="882" cy="564" r="17.5" fill="#fff" stroke="#e60012" stroke-width="1.200"/>
<text x="882" y="574" class="bd" textLength="25" lengthAdjust="spacingAndGlyphs">17</text>
</svg>
</body>
</html>
